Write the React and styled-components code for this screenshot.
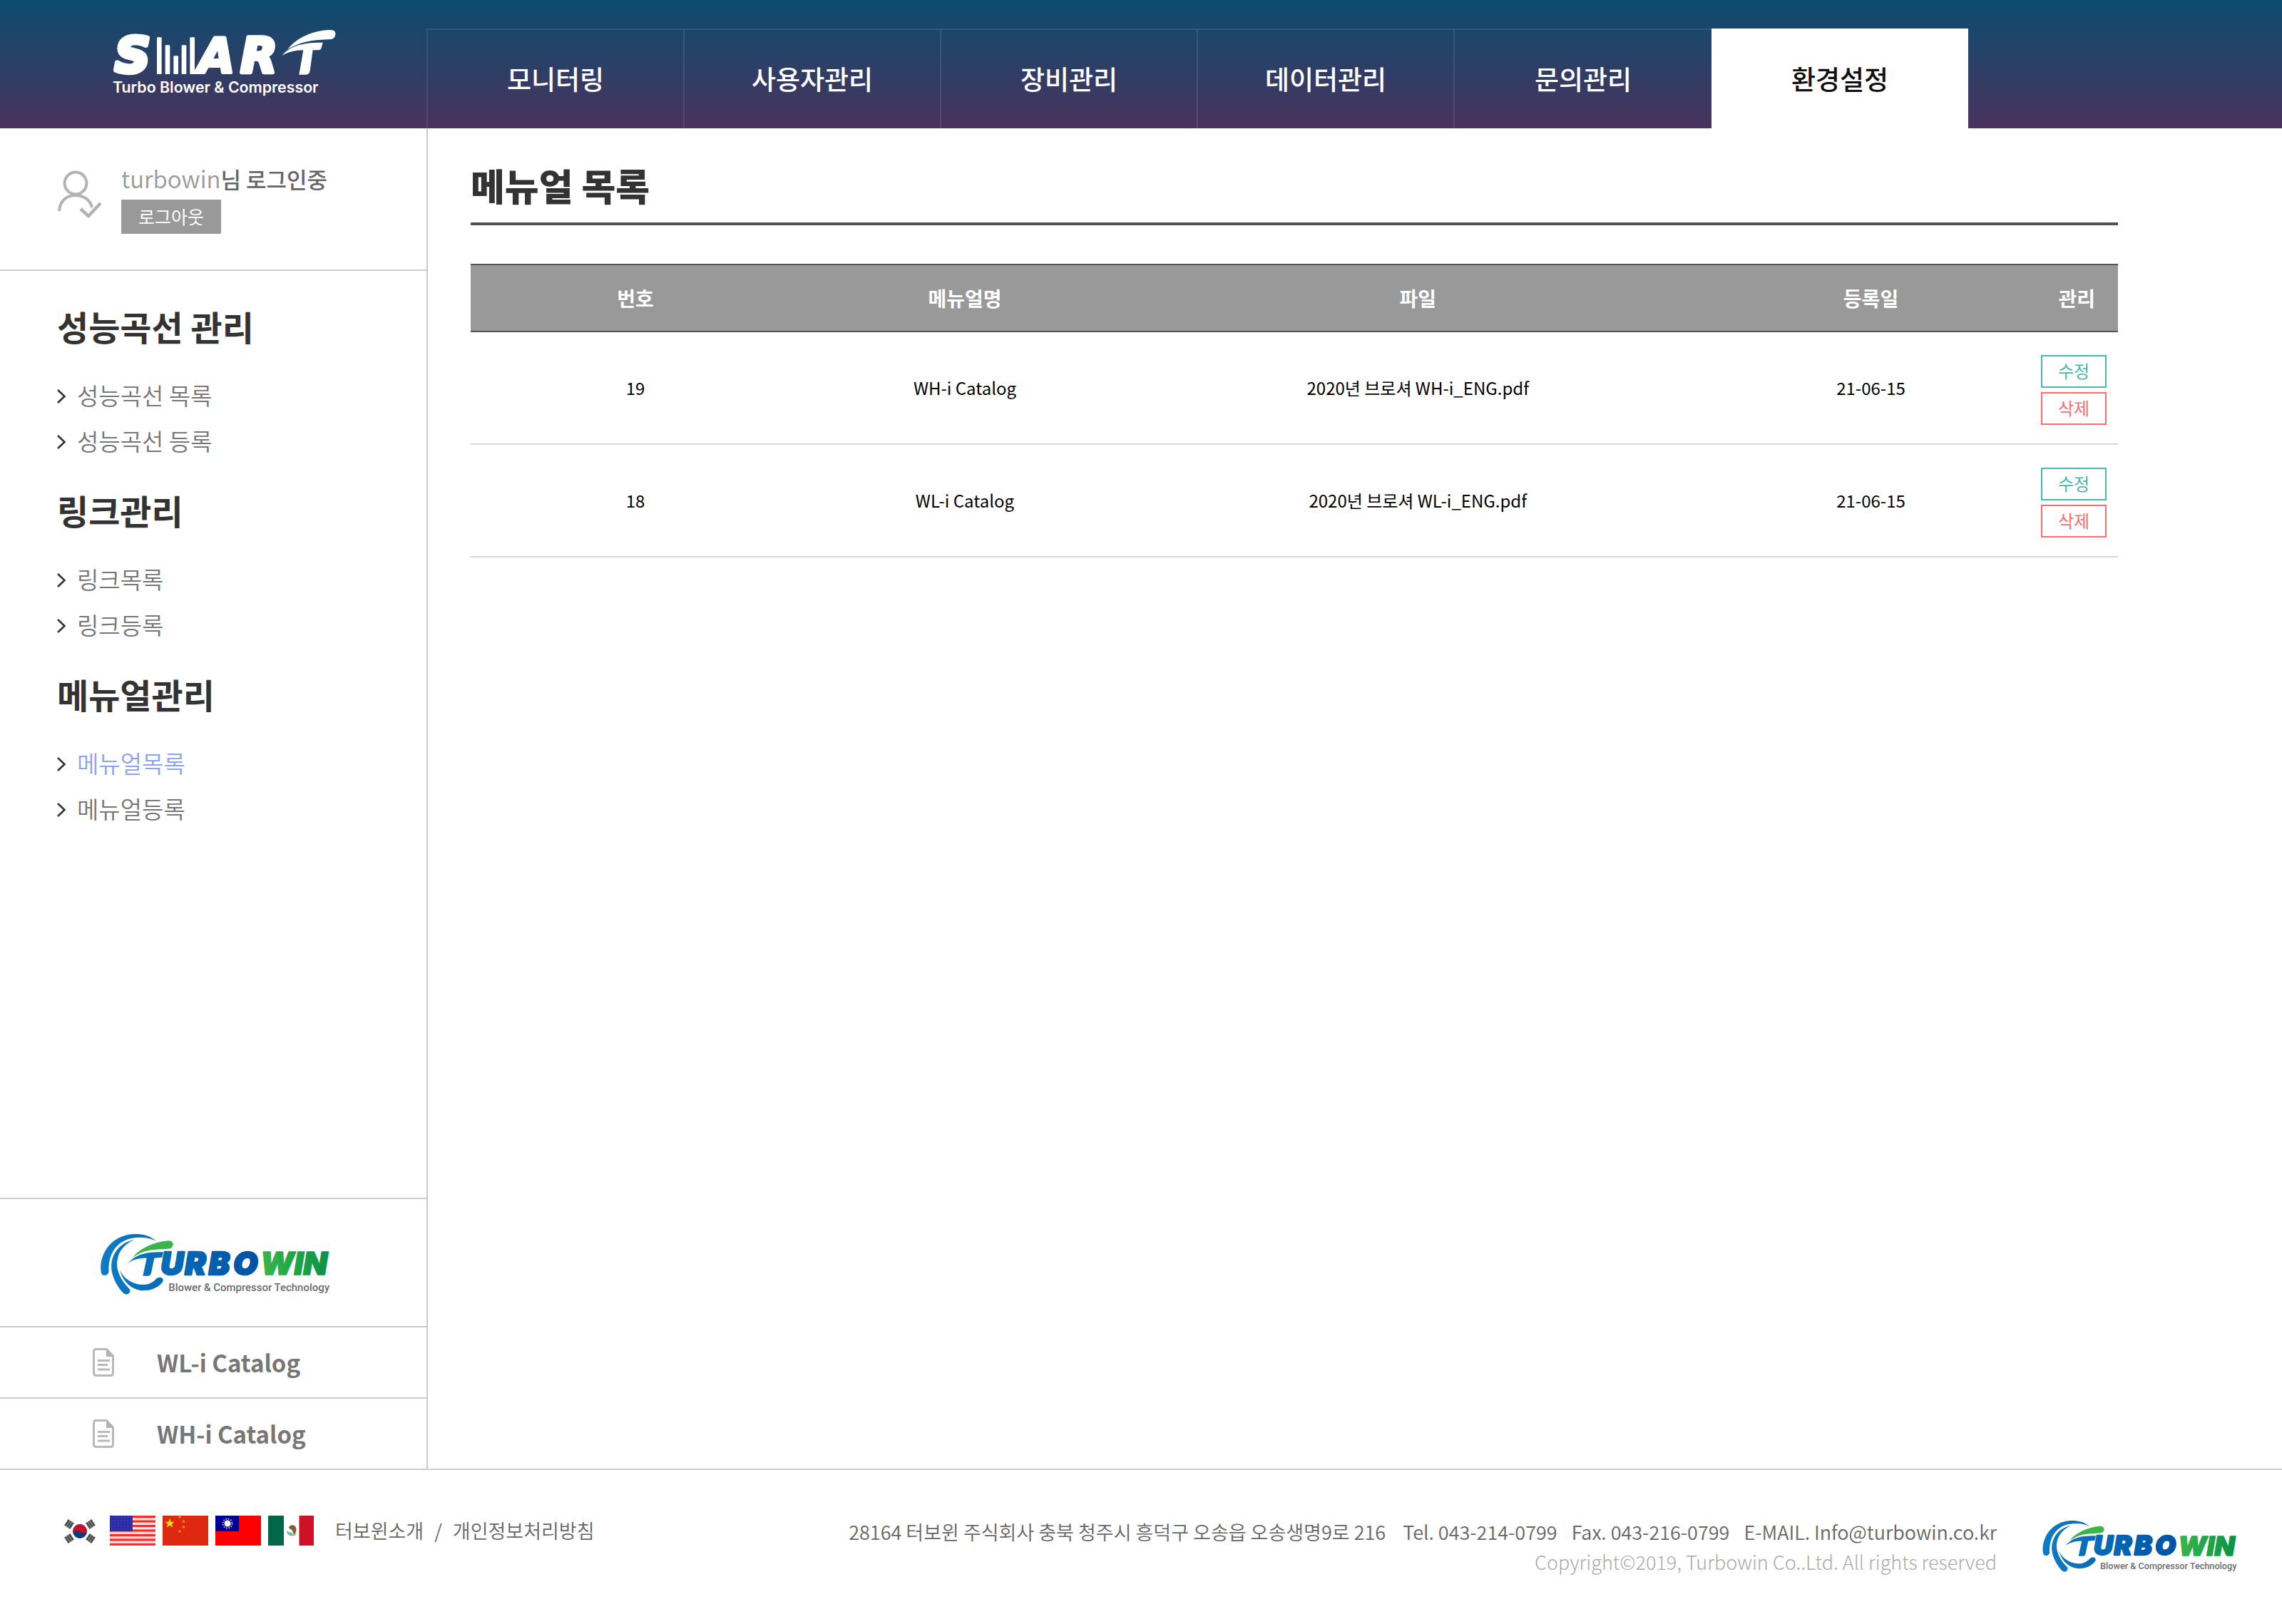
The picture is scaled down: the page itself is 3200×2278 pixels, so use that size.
import React from "react";
import styled, { createGlobalStyle } from "styled-components";

const LINE = "#cccccc";

const GlobalStyle = createGlobalStyle`
  *, *::before, *::after { box-sizing: border-box; }
  body {
    margin: 0;
    background: #fff;
    color: #000;
    font-family: "Noto Sans CJK KR", "Noto Sans", sans-serif;
    font-size: 24px;
  }
  h1, h2, p, ul { margin: 0; padding: 0; }
  ul { list-style: none; }
  a { color: inherit; text-decoration: none; }
  button { font-family: inherit; cursor: pointer; }
  svg { display: block; flex: none; overflow: visible; }
`;

const Page = styled.div`
  display: flex;
  flex-direction: column;
  min-height: 100vh;
`;

/* ---------- header ---------- */

const Header = styled.header`
  display: flex;
  align-items: flex-end;
  height: 180px;
  background: linear-gradient(#0d4c70, #4a325d);
`;

const Brand = styled.a`
  flex: none;
  width: 598px;
  height: 140px;
  padding-left: 158px;
`;

const Nav = styled.nav`
  display: flex;
  flex: 0 1 2162px;
  height: 140px;
  border-left: 2px solid rgba(255, 255, 255, 0.1);
`;

const NavItem = styled.a`
  display: flex;
  flex: 1 1 360px;
  align-items: center;
  justify-content: center;
  padding-bottom: 2px;
  border-top: 2px solid ${(p) => (p.$active ? "#fff" : "rgba(255, 255, 255, 0.1)")};
  border-right: ${(p) => (p.$active || p.$last ? "0" : "2px solid rgba(255, 255, 255, 0.1)")};
  background: ${(p) => (p.$active ? "#fff" : "transparent")};
  color: ${(p) => (p.$active ? "#111" : "#fff")};
  font-size: 37px;
  font-weight: 500;
  line-height: 48px;
  white-space: nowrap;
`;

/* ---------- sidebar ---------- */

const Body = styled.div`
  display: flex;
  flex: 1;
`;

const Sidebar = styled.aside`
  display: flex;
  flex: none;
  flex-direction: column;
  width: 600px;
  border-right: 2px solid ${LINE};
`;

const UserBox = styled.section`
  display: flex;
  align-items: flex-start;
  gap: 28px;
  padding: 50px 40px 50px 80px;
  border-bottom: 2px solid ${LINE};

  svg { margin-top: 10px; }
`;

const UserName = styled.p`
  height: 44px;
  margin-bottom: 6px;
  color: #666;
  font-size: 31px;
  font-weight: 500;
  line-height: 42px;

  span {
    color: #999;
    font-size: 33px;
    font-weight: 350;
    line-height: 1;
  }
`;

const LogoutButton = styled.button`
  display: block;
  width: 140px;
  height: 48px;
  padding: 0 0 2px;
  border: 0;
  background: #999;
  color: #fff;
  font-size: 25px;
  line-height: 46px;
`;

const SideNav = styled.nav`
  padding: 42px 40px 0 80px;
`;

const SideGroup = styled.section`
  margin-bottom: 30px;

  h2 {
    margin-bottom: 30px;
    color: #333;
    font-size: 48px;
    font-weight: 700;
    line-height: 70px;
  }
`;

const SideLink = styled.a`
  display: flex;
  align-items: center;
  gap: 16px;
  color: ${(p) => (p.$active ? "#8ba3f5" : "#777")};
  font-size: 33px;
  font-weight: 350;
  line-height: 64px;

  svg { margin-top: 4px; }
`;

const SideBottom = styled.div`
  margin-top: auto;
`;

const SideLogo = styled.a`
  display: flex;
  height: 180px;
  padding: 48px 0 0 140px;
  border-top: 2px solid ${LINE};
`;

const CatalogLink = styled.a`
  display: flex;
  align-items: center;
  gap: 60px;
  height: 100px;
  padding-left: 130px;
  border-top: 2px solid ${LINE};
  color: #777;
  font-size: 33px;
  font-weight: 700;
  line-height: 48px;
`;

/* ---------- content ---------- */

const Main = styled.main`
  flex: 1;
  min-width: 0;
  padding: 42px 60px;
`;

const Content = styled.div`
  max-width: 2310px;
`;

const Title = styled.h1`
  margin-bottom: 54px;
  padding-bottom: 14px;
  border-bottom: 4px solid #4d5060;
  color: #333;
  font-size: 52px;
  font-weight: 900;
  line-height: 76px;
`;

const Table = styled.table`
  width: 100%;
  table-layout: fixed;
  border-spacing: 0;
  text-align: center;

  th {
    padding: 25px 0;
    border-top: 2px solid #555;
    border-bottom: 2px solid #555;
    background: #999;
    color: #fff;
    font-size: 28px;
    font-weight: 700;
    line-height: 42px;
  }

  td {
    padding: 0 0 2px;
    border-bottom: 2px solid #d5d5d5;
    font-size: 24px;
    font-weight: 400;
  }
`;

const Actions = styled.div`
  display: flex;
  flex-direction: column;
  align-items: flex-end;
  gap: 6px;
  padding: 32px 16px 24px 0;
`;

const ActionButton = styled.button`
  width: 92px;
  height: 46px;
  padding: 0 0 2px;
  border: 2px solid currentColor;
  background: #fff;
  color: ${(p) => (p.$danger ? "#ff6b6b" : "#45b8b4")};
  font-size: 24px;
  line-height: 40px;
`;

/* ---------- footer ---------- */

const Footer = styled.footer`
  display: flex;
  justify-content: space-between;
  align-items: flex-start;
  padding: 64px 64px 66px 80px;
  border-top: 2px solid ${LINE};
`;

const FooterLeft = styled.div`
  display: flex;
  align-items: center;
  gap: 30px;
`;

const Flags = styled.div`
  display: flex;
  gap: 10px;
`;

const Policies = styled.div`
  display: flex;
  gap: 15px;
  color: #666;
  font-size: 27px;
  font-weight: 350;
  line-height: 42px;
`;

const FooterRight = styled.div`
  display: flex;
  align-items: center;
  gap: 64px;
  font-size: 27px;
  font-weight: 300;
  line-height: 42px;
  text-align: right;
`;

const Address = styled.p`
  display: flex;
  justify-content: flex-end;
  gap: 20px;
  padding-top: 2px;
  color: #666;
  font-weight: 350;
`;

const Street = styled.span`
  margin-right: 4px;
`;

const Copyright = styled.p`
  color: #aaa;
`;

/* ---------- drawings ---------- */

const SmartLogo = () => (
  <svg width="316" height="98" viewBox="54 60 948 294" role="img" aria-label="SMART Turbo Blower & Compressor">
    <g fill="#fff" stroke="#fff" strokeWidth="12" strokeLinejoin="round" fontFamily="DejaVu Sans" fontWeight="700" fontStyle="italic">
      <text x="64" y="244" fontSize="205" strokeWidth="20">S</text>
      <text x="413" y="246" fontSize="201">A</text>
      <text x="592" y="246" fontSize="201" strokeWidth="16">R</text>
    </g>
    <g fill="#fff">
      <rect x="240" y="97" width="20" height="155" rx="3" />
      <rect x="275" y="130" width="20" height="122" rx="3" />
      <rect x="310" y="175" width="20" height="77" rx="3" />
      <rect x="344" y="130" width="20" height="122" rx="3" />
      <rect x="379" y="97" width="20" height="155" rx="3" />
      <path d="M790 148C828 98 900 66 972 66C990 66 994 78 990 90C986 103 978 106 960 106C890 108 840 118 790 148Z" />
      <path d="M766 174C800 134 850 118 938 119L932 142Q930 151 920 151L896 151L884 238Q881 254 868 254L838 254L856 151C820 152 795 158 766 174Z" />
    </g>
    <text x="54" y="331" fill="#fff" fontFamily="Inter" fontWeight="600" fontSize="64">
      Turbo Blower &amp; Compressor
    </text>
  </svg>
);

const TurbowinLogo = ({ width, height, id }) => (
  <svg width={width} height={height} viewBox="64 58 966 262" role="img" aria-label="TURBOWIN Blower & Compressor Technology">
    <defs>
      <linearGradient id={`${id}-b`} gradientUnits="userSpaceOnUse" x1="66" x2="740" y1="0" y2="0">
        <stop offset="0" stopColor="#0d7cc4" />
        <stop offset="1" stopColor="#0052a3" />
      </linearGradient>
      <linearGradient id={`${id}-g`} gradientUnits="userSpaceOnUse" x1="745" x2="1027" y1="0" y2="0">
        <stop offset="0" stopColor="#3bb54a" />
        <stop offset="1" stopColor="#0a9346" />
      </linearGradient>
    </defs>
    <g fill={`url(#${id}-b)`}>
      <path d="M300 90C270 66 240 60 205 61C110 66 58 145 67 222C70 241 97 240 100 220C96 150 130 92 195 79C235 72 270 76 300 90Z" />
      <path d="M206 86C140 98 104 155 112 215C118 252 140 288 162 311C176 323 194 312 189 295C165 270 141 240 135 198C132 150 155 108 206 86Z" />
      <path d="M146 212C160 262 195 297 245 300C285 300 312 284 328 262C335 244 312 238 300 250C285 268 265 276 240 275C200 272 165 252 146 212Z" />
      <path d="M180 184C215 148 250 136 330 137L325 160L292 163L279 226Q276 238 264 238L244 238L260 163C230 162 205 168 180 184Z" />
    </g>
    <path fill="#3bb54a" d="M202 160C225 125 290 94 352 89C372 88 378 108 364 120C352 127 300 124 265 131C240 136 220 146 202 160Z" />
    <g fontFamily="Inter" fontWeight="900" fontStyle="italic" fontSize="132" strokeLinejoin="round">
      <g fill={`url(#${id}-b)`} stroke={`url(#${id}-b)`} strokeWidth="8">
        <text x="320" y="233">U</text>
        <text x="421" y="233">R</text>
        <text x="522" y="233">B</text>
        <text x="626" y="233">O</text>
      </g>
      <text x="740" y="234" fill={`url(#${id}-g)`} stroke={`url(#${id}-g)`} strokeWidth="5">WIN</text>
    </g>
    <text x="352" y="303" fill="#6d6e71" fontFamily="Roboto" fontWeight="500" fontSize="45">
      Blower &amp; Compressor Technology
    </text>
  </svg>
);

const UserIcon = () => (
  <svg width="62" height="66" viewBox="0 0 62 66" fill="none" stroke="#b3b3b3" strokeWidth="4" aria-hidden="true">
    <circle cx="26" cy="17" r="15.4" />
    <path d="M3 56C4 42 13 34 26 34C39 34 47 42 49 51" />
    <path d="M33 53L44 63L61 45" strokeWidth="4.6" />
  </svg>
);

const Chevron = () => (
  <svg width="12" height="20" viewBox="0 0 12 20" fill="none" stroke="#333" strokeWidth="2.6" aria-hidden="true">
    <path d="M1 1L10.5 10L1 19" />
  </svg>
);

const DocIcon = () => (
  <svg width="30" height="40" viewBox="0 0 30 40" aria-hidden="true">
    <path d="M5 1.5H19.5L28.5 11V35Q28.5 38.5 25 38.5H5Q1.5 38.5 1.5 35V5Q1.5 1.5 5 1.5Z" fill="#fff" stroke="#b9b9b9" strokeWidth="3" />
    <path d="M19 1L29 12H19Z" fill="#b3b3b3" />
    <path d="M7 17.5H24M7 23.5H21M7 30H24" stroke="#b9b9b9" strokeWidth="3" />
  </svg>
);

const FlagSvg = ({ label, children }) => (
  <svg width="64" height="42" viewBox="0 0 64 42" role="img" aria-label={label}>
    {children}
  </svg>
);

const Trigram = ({ x, y, angle }) => (
  <g transform={`translate(${x} ${y}) rotate(${angle})`} stroke="#4a4a4a" strokeWidth="3">
    <path d="M-5 -3.4H5M-5 0H5M-5 3.4H5" />
  </g>
);

const KoreaFlag = () => (
  <FlagSvg label="한국어">
    <rect width="64" height="42" fill="#fff" />
    <circle cx="32" cy="22" r="10" fill="#0a3a80" />
    <path d="M22.4 19.5A10 10 0 0 1 41.8 20C41 25 35 26 32 22.5C29 19.500 24 20 23.500 26Q21.500 23 22.400 19.500Z" fill="#cc0f2f" />
    <Trigram x={17} y={12} angle={-56} />
    <Trigram x={47} y={12} angle={56} />
    <Trigram x={17} y={32} angle={56} />
    <Trigram x={47} y={32} angle={-56} />
  </FlagSvg>
);

const UsaFlag = () => (
  <FlagSvg label="English">
    <rect width="64" height="42" fill="#ffe3e3" />
    {[0, 1, 2, 3, 4, 5, 6].map((i) => (
      <rect key={i} y={i * 6.46} width="64" height="3.2" fill="#ff2a2a" />
    ))}
    <rect width="32" height="22" fill="#2b2ba6" />
    {[3, 7, 11, 15, 19].map((y) => (
      <path key={y} d={`M2 ${y}H31`} stroke="#5a5ac4" strokeWidth="1" strokeDasharray="1.500 3" />
    ))}
  </FlagSvg>
);

const STAR = "M0 -7L1.700 -2.200L6.700 -2.200L2.700 0.900L4.200 5.700L0 2.800L-4.200 5.700L-2.700 0.900L-6.700 -2.200L-1.700 -2.200Z";

const ChinaFlag = () => (
  <FlagSvg label="中文">
    <rect width="64" height="42" fill="#de2910" />
    <path d={STAR} transform="translate(10 11)" fill="#ffde00" />
    {[[24, 2], [29.5, 8], [29.5, 16], [24, 22]].map(([x, y]) => (
      <path key={y} d={STAR} transform={`translate(${x} ${y}) scale(0.35)`} fill="#ffb400" />
    ))}
  </FlagSvg>
);

const TaiwanFlag = () => (
  <FlagSvg label="繁體中文">
    <rect width="64" height="42" fill="#fe0000" />
    <rect width="33" height="22" fill="#000095" />
    <circle cx="17" cy="11" r="6.500" fill="none" stroke="#fff" strokeOpacity="0.7" strokeWidth="2" strokeDasharray="1.700 1.700" />
    <circle cx="17" cy="11" r="4.500" fill="#fff" />
  </FlagSvg>
);

const MexicoFlag = () => (
  <FlagSvg label="Español">
    <rect width="64" height="42" fill="#fff" />
    <rect width="22" height="42" fill="#006847" />
    <rect x="43.500" width="20.500" height="42" fill="#ce1126" />
    <path d="M27 22A7 7 0 0 0 39 25" fill="none" stroke="#8fae86" strokeWidth="2.400" />
    <path d="M29 17C30 13 35 12 38 15C41 19 39 25 36 26C34 23 35 20 31 19Z" fill="#8a5a32" />
    <path d="M28 24Q32 21 35 26Q31 29 28 24Z" fill="#5fc0c0" />
  </FlagSvg>
);

/* ---------- data ---------- */

const NAV = ["모니터링", "사용자관리", "장비관리", "데이터관리", "문의관리", "환경설정"];

const SIDE_GROUPS = [
  { title: "성능곡선 관리", links: ["성능곡선 목록", "성능곡선 등록"] },
  { title: "링크관리", links: ["링크목록", "링크등록"] },
  { title: "메뉴얼관리", links: ["메뉴얼목록", "메뉴얼등록"] },
];

const ROWS = [
  { no: 19, name: "WH-i Catalog", file: "2020년 브로셔 WH-i_ENG.pdf", date: "21-06-15" },
  { no: 18, name: "WL-i Catalog", file: "2020년 브로셔 WL-i_ENG.pdf", date: "21-06-15" },
];

export default function App() {
  return (
    <>
      <GlobalStyle />
      <Page>
        <Header>
          <Brand href="#home"><SmartLogo /></Brand>
          <Nav>
            {NAV.map((label, i) => (
              <NavItem key={label} href="#nav" $active={label === "환경설정"} $last={i === NAV.length - 2}>
                {label}
              </NavItem>
            ))}
          </Nav>
        </Header>

        <Body>
          <Sidebar>
            <UserBox>
              <UserIcon />
              <div>
                <UserName><span>turbowin</span>님 로그인중</UserName>
                <LogoutButton type="button">로그아웃</LogoutButton>
              </div>
            </UserBox>

            <SideNav>
              {SIDE_GROUPS.map((group) => (
                <SideGroup key={group.title}>
                  <h2>{group.title}</h2>
                  <ul>
                    {group.links.map((link) => (
                      <li key={link}>
                        <SideLink href="#menu" $active={link === "메뉴얼목록"}>
                          <Chevron />
                          {link}
                        </SideLink>
                      </li>
                    ))}
                  </ul>
                </SideGroup>
              ))}
            </SideNav>

            <SideBottom>
              <SideLogo href="#turbowin"><TurbowinLogo id="side" width={322} height={87} /></SideLogo>
              <CatalogLink href="#wl-i"><DocIcon />WL-i Catalog</CatalogLink>
              <CatalogLink href="#wh-i"><DocIcon />WH-i Catalog</CatalogLink>
            </SideBottom>
          </Sidebar>

          <Main>
            <Content>
              <Title>메뉴얼 목록</Title>
              <Table>
                <colgroup>
                  <col width="20%" />
                  <col width="20%" />
                  <col width="35%" />
                  <col width="20%" />
                  <col width="5%" />
                </colgroup>
                <thead>
                  <tr>
                    <th scope="col">번호</th>
                    <th scope="col">메뉴얼명</th>
                    <th scope="col">파일</th>
                    <th scope="col">등록일</th>
                    <th scope="col">관리</th>
                  </tr>
                </thead>
                <tbody>
                  {ROWS.map((row) => (
                    <tr key={row.no}>
                      <td>{row.no}</td>
                      <td>{row.name}</td>
                      <td>{row.file}</td>
                      <td>{row.date}</td>
                      <td>
                        <Actions>
                          <ActionButton type="button">수정</ActionButton>
                          <ActionButton type="button" $danger>삭제</ActionButton>
                        </Actions>
                      </td>
                    </tr>
                  ))}
                </tbody>
              </Table>
            </Content>
          </Main>
        </Body>

        <Footer>
          <FooterLeft>
            <Flags>
              <a href="#ko"><KoreaFlag /></a>
              <a href="#en"><UsaFlag /></a>
              <a href="#zh"><ChinaFlag /></a>
              <a href="#tw"><TaiwanFlag /></a>
              <a href="#es"><MexicoFlag /></a>
            </Flags>
            <Policies>
              <a href="#about">터보윈소개</a>
              <span>/</span>
              <a href="#privacy">개인정보처리방침</a>
            </Policies>
          </FooterLeft>
          <FooterRight>
            <div>
              <Address>
                <Street>28164 터보윈 주식회사 충북 청주시 흥덕구 오송읍 오송생명9로 216</Street>
                <span>Tel. 043-214-0799</span>
                <span>Fax. 043-216-0799</span>
                <span>E-MAIL. Info@turbowin.co.kr</span>
              </Address>
              <Copyright>Copyright©2019, Turbowin Co..Ltd. All rights reserved</Copyright>
            </div>
            <TurbowinLogo id="foot" width={272} height={74} />
          </FooterRight>
        </Footer>
      </Page>
    </>
  );
}
